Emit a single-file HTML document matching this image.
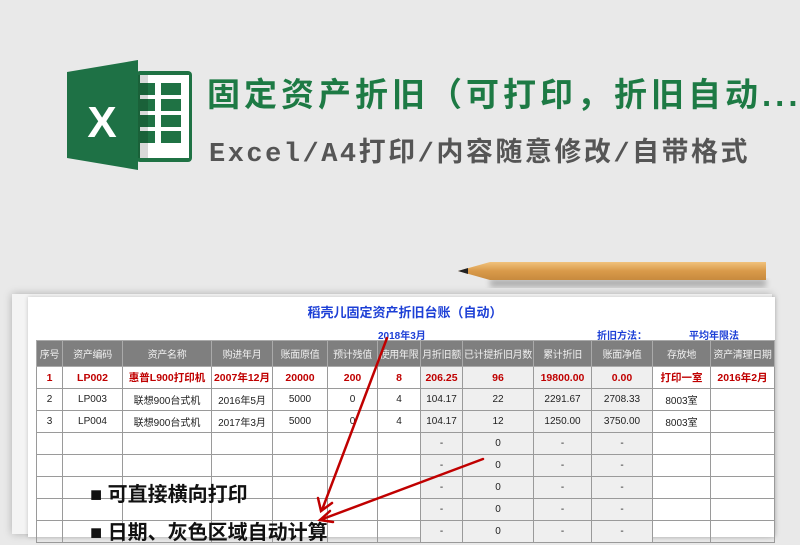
<!DOCTYPE html>
<html><head><meta charset="utf-8"><style>
*{margin:0;padding:0;box-sizing:border-box}
body{width:800px;height:526px;overflow:hidden;background:#e9e9e9;position:relative;font-family:"Liberation Sans","Noto Sans CJK SC",sans-serif}
.abs{position:absolute}
.t1{left:207px;top:68px;font-size:33px;font-weight:bold;color:#1d7a44;letter-spacing:4px;white-space:nowrap;font-family:"Liberation Sans","Noto Sans CJK SC",sans-serif}
.t2{left:209px;top:130px;font-size:27px;font-weight:bold;color:#555;letter-spacing:2.5px;white-space:nowrap;font-family:"Liberation Mono","Noto Sans CJK SC",monospace}
table{position:absolute;left:36px;top:340px;width:738px;border-collapse:collapse;table-layout:fixed;font-size:10px}
td{border:1.5px solid #9a9a9a;height:22px;text-align:center;color:#222;white-space:nowrap;overflow:hidden;padding:0}
tr.h td{background:#7f7f7f;color:#f0f0f0;height:26px;font-size:10px;border-color:#aaa;letter-spacing:-0.3px}
tr.r td{color:#c00000;font-weight:bold;font-size:10.5px}
td.g{background:#efefef}
</style></head><body>
<svg class="abs" style="left:60px;top:50px" width="140" height="130">
<rect x="76" y="21" width="56" height="91" rx="4" fill="#1f7244"/>
<rect x="80" y="25" width="49" height="83" fill="#fff"/>
<g fill="#1f7244">
<rect x="80" y="33" width="15" height="12"/><rect x="101" y="33" width="20" height="12"/>
<rect x="80" y="49" width="15" height="12"/><rect x="101" y="49" width="20" height="12"/>
<rect x="80" y="65" width="15" height="12"/><rect x="101" y="65" width="20" height="12"/>
<rect x="80" y="81" width="15" height="12"/><rect x="101" y="81" width="20" height="12"/>
</g>
<rect x="78" y="25" width="10" height="83" fill="#000" opacity=".15"/>
<polygon points="7,22 78,10 78,120 7,108" fill="#1e7145"/>
<text x="42" y="87" text-anchor="middle" font-family="Liberation Sans" font-weight="bold" font-size="44" fill="#fff">X</text>
</svg>
<div class="abs t1">固定资产折旧（可打印，折旧自动...</div>
<div class="abs t2">Excel/A4打印/内容随意修改/自带格式</div>
<svg class="abs" style="left:450px;top:255px" width="330" height="40">
<defs><linearGradient id="pg" x1="0" y1="0" x2="0" y2="1"><stop offset="0" stop-color="#f1c27c"/><stop offset=".5" stop-color="#d99a4a"/><stop offset="1" stop-color="#c78a3e"/></linearGradient><filter id="bl"><feGaussianBlur stdDeviation="3"/></filter></defs>
<rect x="40" y="24" width="276" height="8" fill="#000" opacity=".25" filter="url(#bl)"/>
<polygon points="8,16 40,7 316,7 316,25 40,25" fill="url(#pg)"/>
<polygon points="8,16 18,13 18,19" fill="#222"/>
</svg>
<div class="abs" style="left:12px;top:294px;width:760px;height:240px;background:#f4f4f4;box-shadow:0 0 8px rgba(0,0,0,.25)"></div>
<div class="abs" style="left:28px;top:297px;width:747px;height:240px;background:#fff;box-shadow:0 0 4px rgba(0,0,0,.2)"></div>
<div class="abs" style="left:0;top:302px;width:800px;text-align:center;padding-left:10px;font-size:13px;font-weight:bold;color:#1c3fd6">稻壳儿固定资产折旧台账（自动）</div>
<div class="abs" style="left:378px;top:327px;font-size:10px;font-weight:bold;color:#1c3fd6">2018年3月</div>
<div class="abs" style="left:597px;top:327px;font-size:10px;font-weight:bold;color:#1c3fd6">折旧方法：</div>
<div class="abs" style="left:689px;top:327px;font-size:10px;font-weight:bold;color:#1c3fd6">平均年限法</div>
<table>
<colgroup><col style="width:26px"><col style="width:60px"><col style="width:89px"><col style="width:61px"><col style="width:55px"><col style="width:50px"><col style="width:43px"><col style="width:42px"><col style="width:71px"><col style="width:58px"><col style="width:61px"><col style="width:58px"><col style="width:64px"></colgroup>
<tr class="h"><td>序号</td><td>资产编码</td><td>资产名称</td><td>购进年月</td><td>账面原值</td><td>预计残值</td><td>使用年限</td><td>月折旧额</td><td>已计提折旧月数</td><td>累计折旧</td><td>账面净值</td><td>存放地</td><td>资产清理日期</td></tr>
<tr class="r"><td>1</td><td>LP002</td><td>惠普L900打印机</td><td>2007年12月</td><td>20000</td><td>200</td><td>8</td><td class="g">206.25</td><td class="g">96</td><td class="g">19800.00</td><td class="g">0.00</td><td>打印一室</td><td>2016年2月</td></tr>
<tr><td>2</td><td>LP003</td><td>联想900台式机</td><td>2016年5月</td><td>5000</td><td>0</td><td>4</td><td class="g">104.17</td><td class="g">22</td><td class="g">2291.67</td><td class="g">2708.33</td><td>8003室</td><td></td></tr>
<tr><td>3</td><td>LP004</td><td>联想900台式机</td><td>2017年3月</td><td>5000</td><td>0</td><td>4</td><td class="g">104.17</td><td class="g">12</td><td class="g">1250.00</td><td class="g">3750.00</td><td>8003室</td><td></td></tr>
<tr><td></td><td></td><td></td><td></td><td></td><td></td><td></td><td class="g">-</td><td class="g">0</td><td class="g">-</td><td class="g">-</td><td></td><td></td></tr>
<tr><td></td><td></td><td></td><td></td><td></td><td></td><td></td><td class="g">-</td><td class="g">0</td><td class="g">-</td><td class="g">-</td><td></td><td></td></tr>
<tr><td></td><td></td><td></td><td></td><td></td><td></td><td></td><td class="g">-</td><td class="g">0</td><td class="g">-</td><td class="g">-</td><td></td><td></td></tr>
<tr><td></td><td></td><td></td><td></td><td></td><td></td><td></td><td class="g">-</td><td class="g">0</td><td class="g">-</td><td class="g">-</td><td></td><td></td></tr>
<tr><td></td><td></td><td></td><td></td><td></td><td></td><td></td><td class="g">-</td><td class="g">0</td><td class="g">-</td><td class="g">-</td><td></td><td></td></tr>
</table>
<div class="abs" style="left:90px;top:478px;font-size:20px;font-weight:bold;color:#111;white-space:nowrap">■ 可直接横向打印</div>
<div class="abs" style="left:90px;top:516px;font-size:20px;font-weight:bold;color:#111;white-space:nowrap">■ 日期、灰色区域自动计算</div>
<svg class="abs" style="left:0;top:0" width="800" height="526">
<g stroke="#c00000" stroke-width="2.5" fill="none" stroke-linecap="round">
<line x1="387" y1="338" x2="322" y2="510"/>
<polyline points="318,498 321,511 332,503"/>
<line x1="483" y1="459" x2="320" y2="520"/>
<polyline points="330,511 320,520 333,522"/>
</g>
</svg>
</body></html>
